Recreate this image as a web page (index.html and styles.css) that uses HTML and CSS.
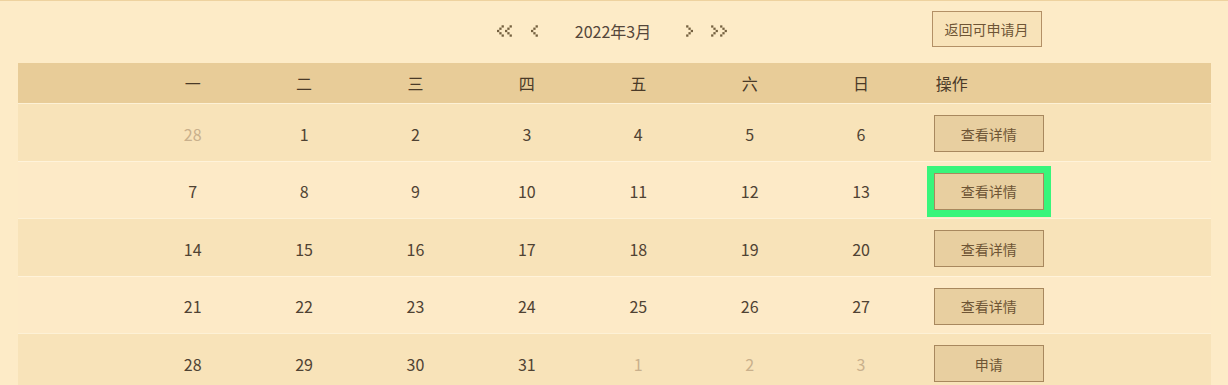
FILE: index.html
```html
<!DOCTYPE html>
<html lang="zh-CN">
<head>
<meta charset="utf-8">
<title>申请日历</title>
<link rel="stylesheet" href="styles.css">
</head>
<body>
<div class="page">
  <div class="nav">
    <div class="nav-left"></div>
    <div class="pager">
      <svg class="arr arr-dbl" width="16" height="12" viewBox="0 0 14 10" fill="#74603f">
        <rect x="4" y="0" width="2" height="2"/><rect x="2" y="2" width="2" height="2"/><rect x="0" y="4" width="2" height="2"/><rect x="2" y="6" width="2" height="2"/><rect x="4" y="8" width="2" height="2"/>
        <rect x="11" y="0" width="2" height="2"/><rect x="9" y="2" width="2" height="2"/><rect x="7" y="4" width="2" height="2"/><rect x="9" y="6" width="2" height="2"/><rect x="11" y="8" width="2" height="2"/>
      </svg>
      <svg class="arr arr-prev" width="8" height="12" viewBox="0 0 7 10" fill="#74603f">
        <rect x="4" y="0" width="2" height="2"/><rect x="2" y="2" width="2" height="2"/><rect x="0" y="4" width="2" height="2"/><rect x="2" y="6" width="2" height="2"/><rect x="4" y="8" width="2" height="2"/>
      </svg>
      <span class="month">2022年3月</span>
      <svg class="arr arr-next" width="8" height="12" viewBox="0 0 7 10" fill="#74603f">
        <rect x="1" y="0" width="2" height="2"/><rect x="3" y="2" width="2" height="2"/><rect x="5" y="4" width="2" height="2"/><rect x="3" y="6" width="2" height="2"/><rect x="1" y="8" width="2" height="2"/>
      </svg>
      <svg class="arr arr-dbl-next" width="18" height="12" viewBox="0 0 16 10" fill="#74603f">
        <rect x="1" y="0" width="2" height="2"/><rect x="3" y="2" width="2" height="2"/><rect x="5" y="4" width="2" height="2"/><rect x="3" y="6" width="2" height="2"/><rect x="1" y="8" width="2" height="2"/>
        <rect x="9" y="0" width="2" height="2"/><rect x="11" y="2" width="2" height="2"/><rect x="13" y="4" width="2" height="2"/><rect x="11" y="6" width="2" height="2"/><rect x="9" y="8" width="2" height="2"/>
      </svg>
    </div>
    <div class="nav-right"><button class="btn btn-return">返回可申请月</button></div>
  </div>

  <div class="table">
    <div class="row head">
      <span></span><span>一</span><span>二</span><span>三</span><span>四</span><span>五</span><span>六</span><span>日</span><span class="op op-title">操作</span>
    </div>
    <div class="row odd">
      <span></span><span class="muted">28</span><span>1</span><span>2</span><span>3</span><span>4</span><span>5</span><span>6</span>
      <span class="op"><button class="btn">查看详情</button></span>
    </div>
    <div class="row even">
      <span></span><span>7</span><span>8</span><span>9</span><span>10</span><span>11</span><span>12</span><span>13</span>
      <span class="op"><button class="btn btn-focus">查看详情</button></span>
    </div>
    <div class="row odd">
      <span></span><span>14</span><span>15</span><span>16</span><span>17</span><span>18</span><span>19</span><span>20</span>
      <span class="op"><button class="btn">查看详情</button></span>
    </div>
    <div class="row even">
      <span></span><span>21</span><span>22</span><span>23</span><span>24</span><span>25</span><span>26</span><span>27</span>
      <span class="op"><button class="btn">查看详情</button></span>
    </div>
    <div class="row odd">
      <span></span><span>28</span><span>29</span><span>30</span><span>31</span><span class="muted">1</span><span class="muted">2</span><span class="muted">3</span>
      <span class="op"><button class="btn">申请</button></span>
    </div>
  </div>
</div>
</body>
</html>
```

FILE: styles.css
```css
html, body {
  margin: 0;
  padding: 0;
}
body {
  background: #fdebc7;
  border-top: 1px solid #eed29f;
  font-family: "Noto Sans CJK SC", "Noto Sans", sans-serif;
  color: #4f4233;
  overflow: hidden;
}
.page {
  padding: 0 17px 0 18px;
}
.nav {
  height: 62px;
  display: grid;
  grid-template-columns: 1fr 240px 1fr;
  align-items: start;
}
.pager {
  display: flex;
  align-items: center;
  justify-content: center;
  margin-top: 19px;
  height: 22px;
  margin-right: 4px;
}
.arr { display: block; flex: none; }
.arr-prev { margin-left: 18px; }
.month {
  margin-left: 36px;
  margin-right: 34px;
  font-size: 16px;
  line-height: 22px;
  color: #54463a;
}
.arr-dbl-next { margin-left: 17px; }
.nav-right {
  padding-left: 197px;
  padding-top: 10px;
}
.btn {
  width: 110px;
  height: 37px;
  box-sizing: border-box;
  border: 1px solid #a8885e;
  background: #e8cfa0;
  color: #6e5535;
  font-family: "Noto Sans CJK SC", sans-serif;
  font-size: 14px;
  padding: 0;
  margin: 0;
  cursor: pointer;
}
.btn-return {
  height: 36px;
  background: #f8e3b9;
  border-color: #b39066;
}
.btn-focus {
  outline: 7px solid #38f57b;
  outline-offset: 0;
}
.table {
  display: flex;
  flex-direction: column;
}
.row {
  display: grid;
  grid-template-columns: 119px repeat(7, 111.4px) 1fr;
  align-items: center;
  text-align: center;
  font-size: 16px;
}
.row.head {
  height: 40px;
  background: #e8cc98;
  color: #4a3a28;
}
.row.odd, .row.even {
  height: 57.5px;
  box-sizing: border-box;
  padding-top: 4px;
  box-shadow: inset 0 1px 0 rgba(255, 246, 226, 0.7);
}
.row.odd { background: #f8e3b9; }
.row.even { background: #fdeac7; }
.muted { color: #c9b08c; }
.op {
  text-align: left;
  padding-left: 17px;
  display: flex;
  align-items: center;
}
.op-title {
  padding-left: 19px;
}
```
